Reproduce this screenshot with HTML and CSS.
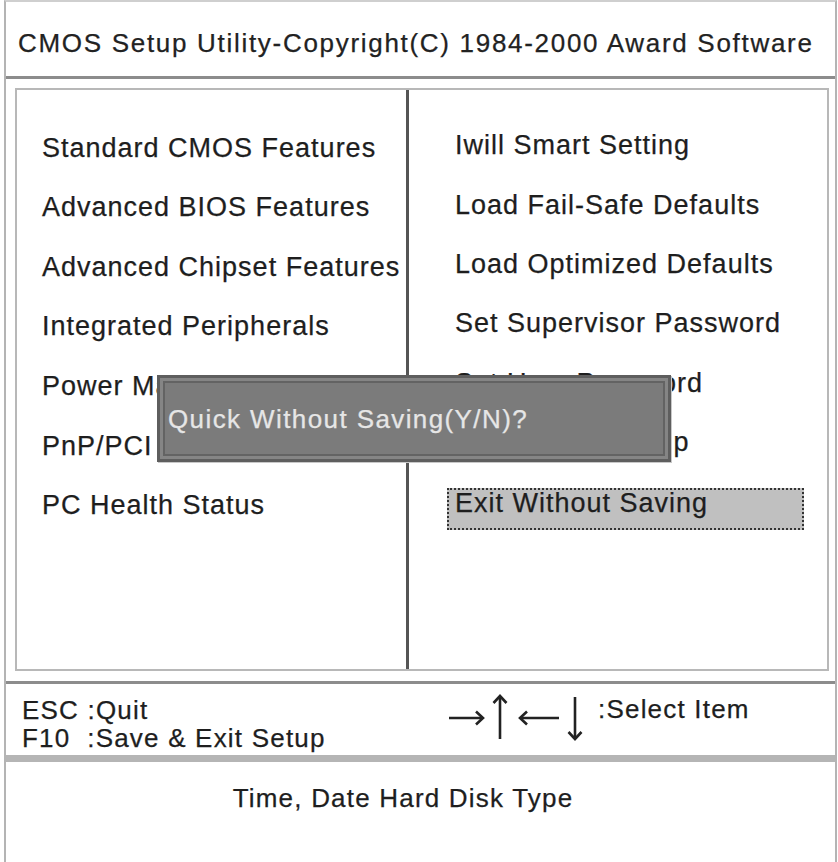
FILE: index.html
```html
<!DOCTYPE html>
<html lang="en">
<head>
<meta charset="utf-8">
<title>CMOS Setup Utility</title>
<link rel="stylesheet" href="styles.css">
</head>
<body>
<div class="frame">
  <header class="title">CMOS Setup Utility-Copyright(C) 1984-2000 Award Software</header>
  <div class="rule"></div>
  <main class="main">
    <div class="menu">
      <ul class="col col-left">
        <li>Standard CMOS Features</li>
        <li>Advanced BIOS Features</li>
        <li>Advanced Chipset Features</li>
        <li>Integrated Peripherals</li>
        <li>Power Management Setup</li>
        <li>PnP/PCI Configurations</li>
        <li>PC Health Status</li>
      </ul>
      <div class="divider"></div>
      <ul class="col col-right">
        <li>Iwill Smart Setting</li>
        <li>Load Fail-Safe Defaults</li>
        <li>Load Optimized Defaults</li>
        <li>Set Supervisor Password</li>
        <li>Set User Password</li>
        <li>Save &amp; Exit Setup</li>
        <li><span class="selected">Exit Without Saving</span></li>
      </ul>
      <div class="dialog"><div class="dialog-inner">Quick Without Saving(Y/N)?</div></div>
    </div>
  </main>
  <div class="rule"></div>
  <div class="keys">
    <div class="keys-left">
      <div>ESC :Quit</div>
      <div>F10&nbsp; :Save &amp; Exit Setup</div>
    </div>
    <svg class="arrows" width="145" height="52" viewBox="0 0 145 52" aria-hidden="true">
      <g fill="none" stroke="#222" stroke-width="2.6" stroke-linecap="butt" stroke-linejoin="miter">
        <path d="M2 26 H36"/>
        <path d="M29 19.5 L36 26 L29 32.5"/>
        <path d="M53 47 V4"/>
        <path d="M46.5 11 L53 4 L59.5 11"/>
        <path d="M73 26 H112"/>
        <path d="M80 19.5 L73 26 L80 32.5"/>
        <path d="M128 5 V47"/>
        <path d="M121.5 40 L128 47 L134.5 40"/>
      </g>
    </svg>
    <div class="select">:Select Item</div>
  </div>
  <div class="bar"></div>
  <div class="help">Time, Date Hard Disk Type</div>
</div>
</body>
</html>
```
FILE: styles.css
```css
* {
  box-sizing: border-box;
}

html, body {
  margin: 0;
  padding: 0;
  background: #ffffff;
  height: 862px;
  overflow: hidden;
}

body {
  font-family: "Liberation Sans", Arial, sans-serif;
  color: #1e1e1e;
  -webkit-text-stroke: 0.25px currentColor;
}

.frame {
  margin-left: 4px;
  width: 833px;
  height: 862px;
  border-left: 2px solid #b4b4b4;
  border-right: 2px solid #b4b4b4;
  border-top: 2px solid #cfcfcf;
}

.title {
  height: 74px;
  padding: 26px 0 0 12px;
  font-size: 26px;
  line-height: 30px;
  letter-spacing: 1.7px;
  white-space: nowrap;
  color: #222;
}

.rule {
  height: 3px;
  background: #8c8c8c;
}

.main {
  height: 602px;
  padding: 9px 6px 10px 9px;
}

.menu {
  position: relative;
  display: flex;
  width: 814px;
  height: 583px;
  border: 2px solid #b8b8b8;
}

.col {
  list-style: none;
  margin: 0;
  font-size: 27px;
  letter-spacing: 1px;
  white-space: nowrap;
}

.col li {
  display: flex;
  align-items: center;
}

.col-left {
  width: 389px;
  padding: 28.2px 0 0 25px;
}

.col-left li {
  height: 59.67px;
}

.col-right {
  flex: 1;
  padding: 26.35px 0 0 46px;
}

.col-right li {
  height: 59.3px;
}

.divider {
  width: 3px;
  background: #555555;
}

.selected {
  display: block;
  width: 357px;
  height: 42px;
  margin: 14px 0 0 -8px;
  padding: 0 0 12px 6px;
  line-height: 26px;
  background: #c0c0c0;
  border: 2px dotted #333333;
}

.dialog {
  position: absolute;
  left: 140px;
  top: 285px;
  width: 514px;
  height: 87px;
  padding: 3px;
  background: #858585;
  border: 3px solid #5e5e5e;
  box-shadow: 1px 1px 0 #c8c8c8;
}

.dialog-inner {
  height: 100%;
  padding: 21px 0 0 3px;
  background: #7b7b7b;
  border: 2px solid #636363;
  color: #e6e6e6;
  font-size: 26px;
  line-height: 30px;
  letter-spacing: 1.4px;
  white-space: nowrap;
}

.keys {
  display: flex;
  align-items: flex-start;
  height: 71px;
  font-size: 26px;
  letter-spacing: 1.2px;
  line-height: 28px;
  white-space: nowrap;
}

.keys-left {
  width: 441px;
  padding: 12px 0 0 16px;
}

.arrows {
  display: block;
  margin-top: 8px;
}

.select {
  margin: 11px 0 0 6px;
}

.bar {
  height: 7px;
  background: #b5b5b5;
}

.help {
  padding: 22px 35px 0 0;
  text-align: center;
  font-size: 26px;
  letter-spacing: 1.2px;
  line-height: 28px;
}
```
